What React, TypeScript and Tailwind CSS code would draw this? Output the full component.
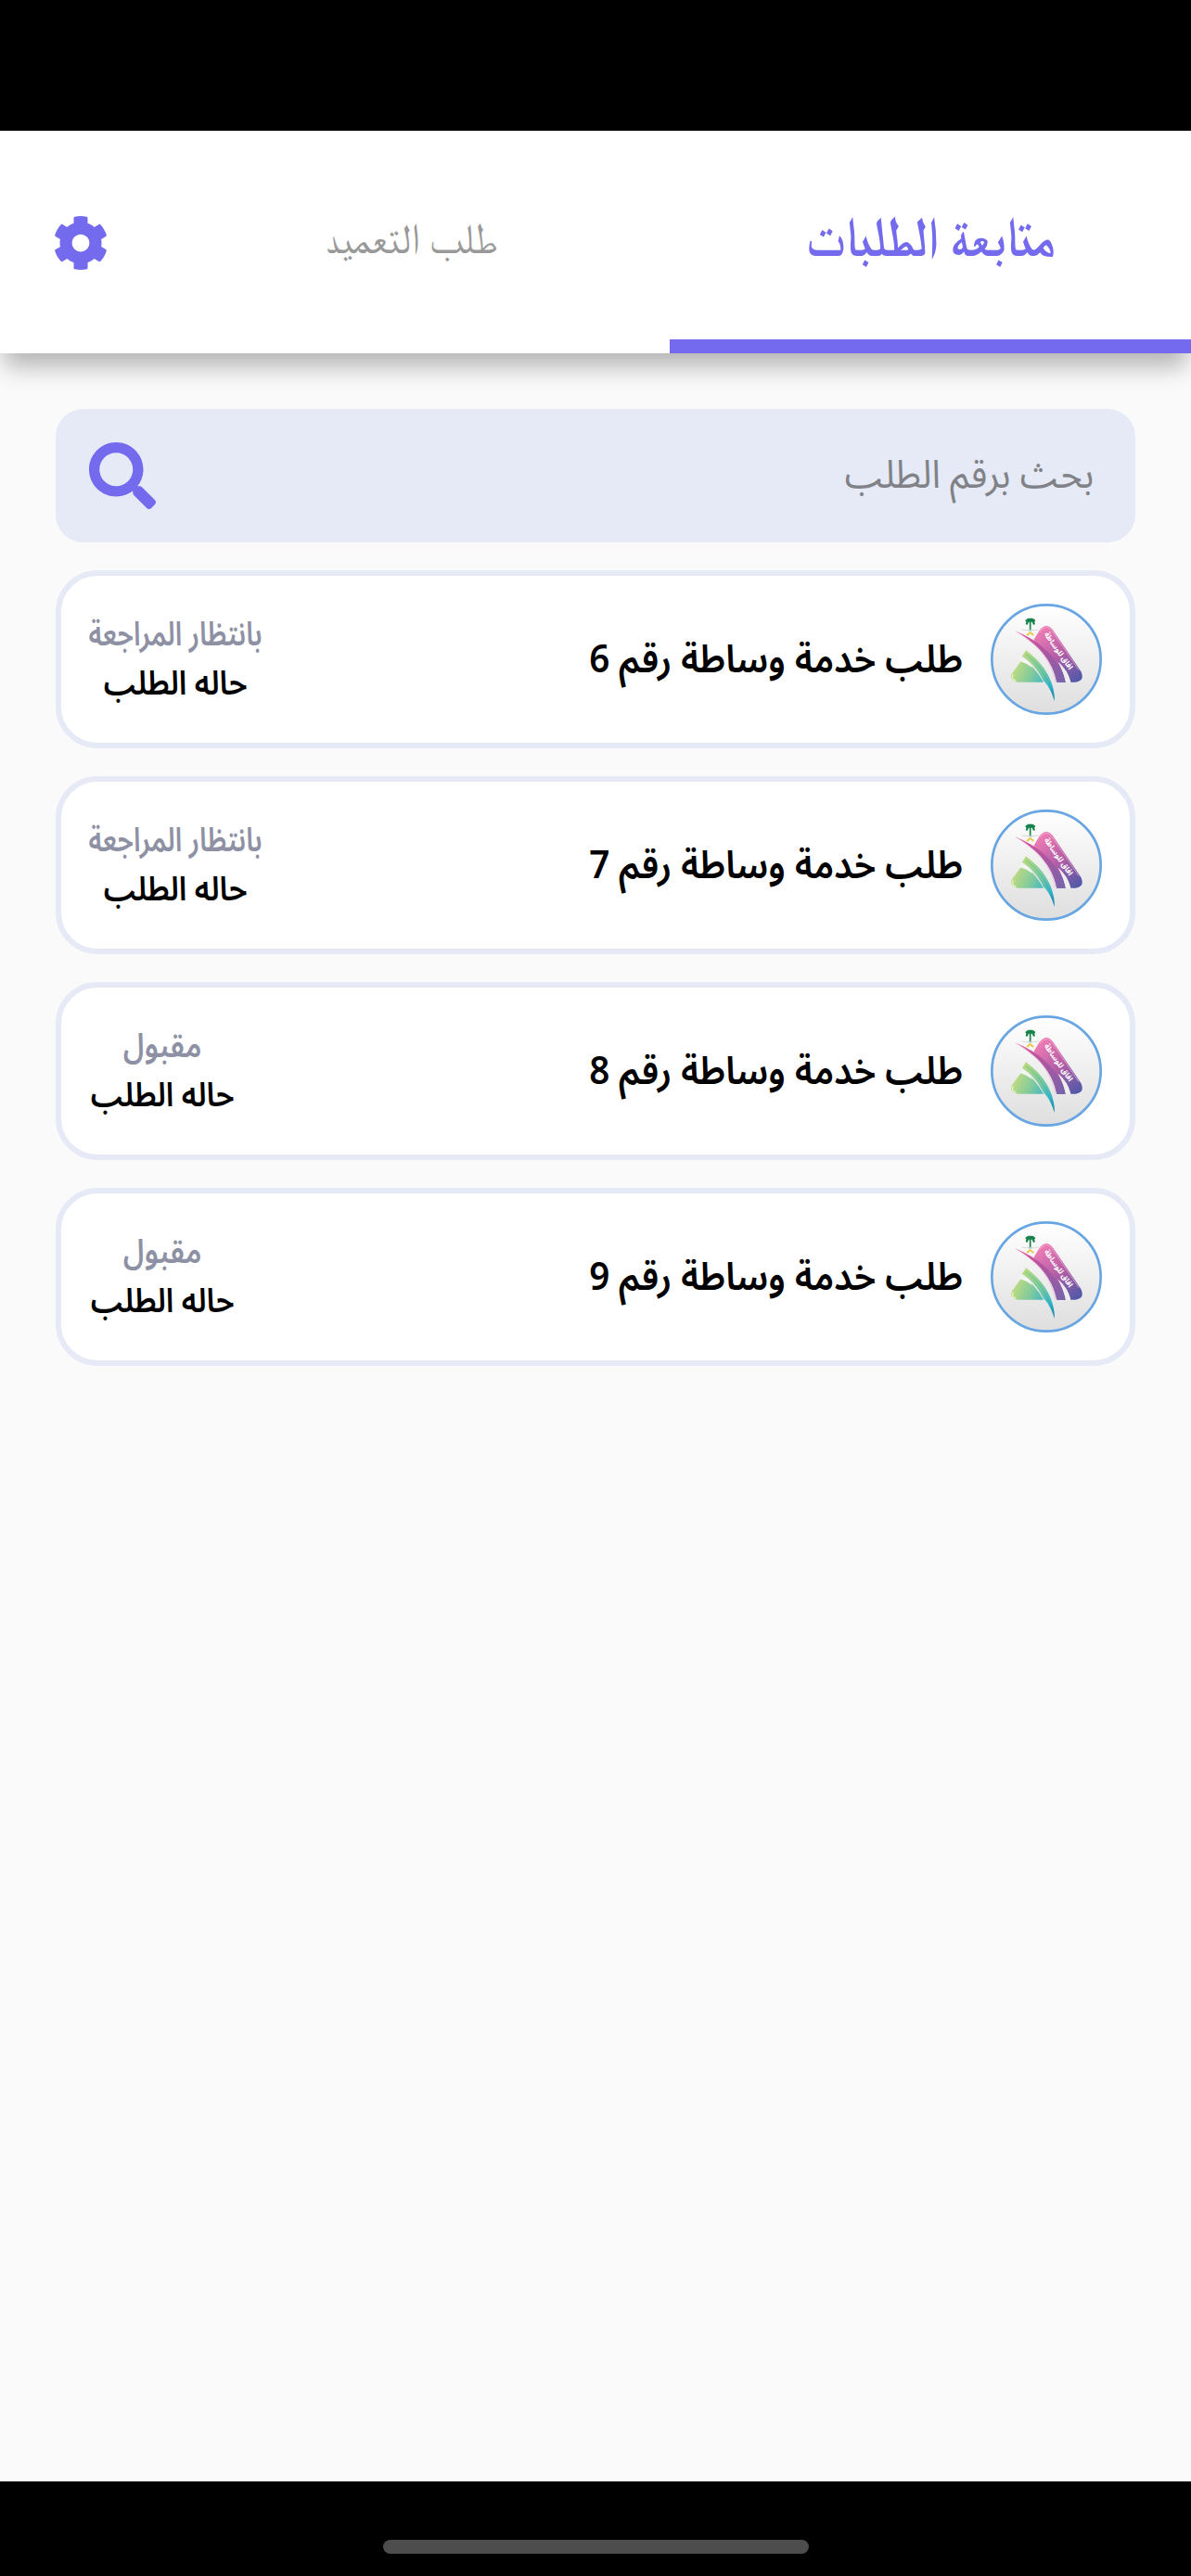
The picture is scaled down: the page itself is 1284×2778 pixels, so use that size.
import { FaCog, FaSearch } from 'react-icons/fa';
import { clsx } from 'clsx';

type Order = {
    id: number;
    status: 'pending' | 'accepted';
}

const orders: Order[] = [
    { id: 6, status: 'pending' },
    { id: 7, status: 'pending' },
    { id: 8, status: 'accepted' },
    { id: 9, status: 'accepted' },
];

const App = () => {
    return (
        <div dir="rtl" className="flex h-[2778px] w-[1284px] flex-col bg-black font-['Noto_Sans_Arabic','Noto_Sans',sans-serif]">
            <div className="h-[141px] shrink-0" />
            <main className="flex flex-1 flex-col overflow-hidden bg-[#fafafa]">
                <Header />
                <div className="flex flex-col gap-[30px] px-[60px] pt-[60px]">
                    <SearchBar />
                    {orders.map(order => <OrderCard key={order.id} order={order} />)}
                </div>
            </main>
            <div className="flex h-[102px] shrink-0 items-start justify-center pt-[63px]">
                <div className="h-[15px] w-[459px] rounded-full bg-[#4d4d4d]" />
            </div>
        </div>
    )
}

const Header = () => (
    <header className="flex h-[240px] shrink-0 bg-white font-['FreeSerif','Noto_Naskh_Arabic',serif] shadow-[0_18px_22px_-5px_rgba(0,0,0,0.2),0_20px_30px_-4px_rgba(0,0,0,0.1)]">
        <Tab label="متابعة الطلبات" active />
        <Tab label="طلب التعميد" />
        <button className="flex w-[159px] items-center justify-end pt-0.5 pl-[57px]">
            <FaCog size={60} className="text-[#736aed]" />
        </button>
    </header>
)

const Tab = ({ label, active }: { label: string, active?: boolean }) => (
    <button
        className={clsx(
            'flex w-[562.5px] items-center justify-center border-b-[15px] whitespace-nowrap',
            active ? 'border-[#736aed] pt-2 pl-0.5 text-[60px] font-bold text-[#736aed]' : 'border-transparent pt-3 pl-1.5 text-[46px] text-[#999999]'
        )}
    >
        <span className={active ? 'scale-x-[0.845]' : 'scale-x-[0.93]'}>{label}</span>
    </button>
)

const SearchBar = () => (
    <div className="flex h-[144px] items-center justify-between rounded-[30px] bg-[#e6eaf6] pr-[45px] pl-[36px]">
        <span className="mb-px origin-right scale-x-[0.945] text-[42px] text-[#808287]">بحث برقم الطلب</span>
        <FaSearch size={72} className="text-[#736aed]" />
    </div>
)

const OrderCard = ({ order }: { order: Order }) => {
    const pending = order.status === 'pending';

    return (
        <div className="flex h-[192px] items-center rounded-[45px] border-6 border-[#e6eaf6] bg-white px-[30px] font-semibold">
            <Logo />
            <h3 className="mr-[30px] flex-1 origin-right scale-x-[0.92] text-[42px]">طلب خدمة وساطة رقم {order.id}</h3>
            <div className={clsx('flex flex-col items-center pt-[2px] text-[36px] leading-[53px] whitespace-nowrap', pending ? 'w-[186px]' : 'w-[158px]')}>
                <span className={clsx('text-[#8e91a4]', pending ? 'scale-x-[0.8]' : 'scale-x-[0.88]')}>
                    {pending ? 'بانتظار المراجعة' : 'مقبول'}
                </span>
                <span className="scale-x-[0.91]">حاله الطلب</span>
            </div>
        </div>
    )
}

const Logo = () => (
    <svg viewBox="0 0 360 360" className="size-[120px] shrink-0">
        <defs>
            <linearGradient id="disc" x1="0" y1="0" x2="0" y2="1">
                <stop offset="0" stopColor="#ffffff" />
                <stop offset="1" stopColor="#dedede" />
            </linearGradient>
            <linearGradient id="pink" gradientUnits="userSpaceOnUse" x1="150" y1="95" x2="280" y2="250">
                <stop offset="0" stopColor="#ee7bb4" />
                <stop offset="0.5" stopColor="#b35ea6" />
                <stop offset="1" stopColor="#5259a8" />
            </linearGradient>
            <linearGradient id="ribbon" gradientUnits="userSpaceOnUse" x1="85" y1="90" x2="230" y2="250">
                <stop offset="0" stopColor="#e0559f" />
                <stop offset="0.45" stopColor="#b2559f" />
                <stop offset="1" stopColor="#7a62ab" />
            </linearGradient>
            <linearGradient id="green" gradientUnits="userSpaceOnUse" x1="75" y1="200" x2="185" y2="250">
                <stop offset="0" stopColor="#c3dc80" />
                <stop offset="0.5" stopColor="#85cb9b" />
                <stop offset="1" stopColor="#36b3c8" />
            </linearGradient>
            <linearGradient id="blade" gradientUnits="userSpaceOnUse" x1="105" y1="160" x2="205" y2="300">
                <stop offset="0" stopColor="#b9db7d" />
                <stop offset="0.55" stopColor="#6ac5a5" />
                <stop offset="0.8" stopColor="#35b4cb" />
                <stop offset="1" stopColor="#1688a8" />
            </linearGradient>
        </defs>
        <circle cx="180" cy="180" r="176" fill="url(#disc)" stroke="#68a5e3" strokeWidth="8" />

        {/* palm and swords */}
        <g stroke="#17834a" strokeLinecap="round" fill="none">
            <path d="M128 59v26" strokeWidth="5" />
            <path d="M128 58q-6 -8 -11 7M128 58q7 -8 12 7M128 55q-9 -6 -12 0M128 55q9 -6 13 0M122 51h12" strokeWidth="7" />
            <path d="M122 86h12" strokeWidth="3" />
        </g>
        <path d="M101 84q14 3 27 1q14 2 27 -1" stroke="#d5dbdc" strokeWidth="3" fill="none" />
        <path d="M117 102l11 -9l11 9" stroke="#e8c440" strokeWidth="5" fill="none" />

        <path d="M139 118L158 86Q180 58 201 85L292 219Q306 249 275 254H259Q252 225 218 188Q236 220 243 254H214C205 203 180 153 139 118Z" fill="url(#pink)" />
        <path d="M81 89C150 116 216 166 242 254H214C200 185 154 130 81 89Z" fill="url(#ribbon)" />
        <path d="M81 89C145 128 194 176 210 254" stroke="#f3a0cc" strokeWidth="2" fill="none" opacity="0.8" />
        <path d="M159 91Q180 63 198 87L285 215" stroke="#fbc0dc" strokeWidth="3" fill="none" opacity="0.6" />
        <path d="M218 188Q250 214 259 254H243Q236 220 218 188Z" fill="#eeeeee" />

        {/* hill, then the blade that sweeps over it */}
        <path d="M104 180Q143 203 171 254H88Q58 248 69 226L98 186Z" fill="url(#green)" />
        <path d="M102 170L114 151C165 188 208 245 207 316C199 290 187 265 171 250C155 215 130 188 102 170Z" fill="url(#blade)" />
        <path d="M114 164C157 195 185 235 205 307" stroke="#2d9fa8" strokeWidth="2" fill="none" opacity="0.6" />
        <path d="M98 175Q125 184 134 207Q119 194 94 186Z" fill="#f4f6f4" />
        <path d="M73 229q-8 16 9 20" stroke="#eaf3b9" strokeWidth="4" fill="none" />

        <text
            x="0"
            y="0"
            transform="translate(213 157) rotate(55)"
            textAnchor="middle"
            fill="#ffffff"
            className="font-['Noto_Sans_Arabic',sans-serif] text-[24px] font-bold"
        >
            افاق للوساطة
        </text>
    </svg>
)

export default App
